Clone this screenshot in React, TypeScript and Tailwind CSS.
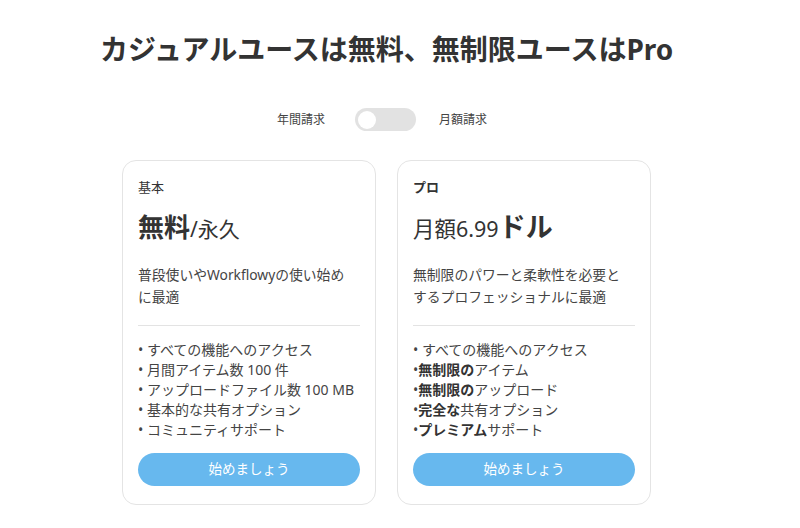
import React from 'react';

const font = { fontFamily: '"Noto Sans", "Noto Sans CJK JP", sans-serif' };

type Feature = { bold?: string; text: string; spaced?: boolean };

const plans = [
  {
    name: '基本',
    nameBold: false,
    price: (
      <>
        <span className="text-[26px] font-bold">無料</span>
        <span className="text-[21px]">/永久</span>
      </>
    ),
    desc: ['普段使いやWorkflowyの使い始め', 'に最適'],
    features: [
      { text: 'すべての機能へのアクセス', spaced: true },
      { text: '月間アイテム数 100 件', spaced: true },
      { text: 'アップロードファイル数 100 MB', spaced: true },
      { text: '基本的な共有オプション', spaced: true },
      { text: 'コミュニティサポート', spaced: true },
    ] as Feature[],
  },
  {
    name: 'プロ',
    nameBold: true,
    price: (
      <>
        <span className="text-[21.5px]">月額6.99</span>
        <span className="text-[27px] font-bold">ドル</span>
      </>
    ),
    desc: ['無制限のパワーと柔軟性を必要と', 'するプロフェッショナルに最適'],
    features: [
      { text: 'すべての機能へのアクセス', spaced: true },
      { bold: '無制限の', text: 'アイテム' },
      { bold: '無制限の', text: 'アップロード' },
      { bold: '完全な', text: '共有オプション' },
      { bold: 'プレミアム', text: 'サポート' },
    ] as Feature[],
  },
];

export default function App() {
  return (
    <div className="w-[800px] h-[528px] bg-white text-[#333] overflow-hidden" style={font}>
      {/* Title */}
      <div className="pt-[27px] pl-[100px]">
        <h1 className="text-[28px] font-bold leading-[44px]">
          カジュアルユースは無料、無制限ユースはPro
        </h1>
      </div>

      {/* Billing toggle */}
      <div className="mt-[37px] flex items-center justify-center pr-[36px] text-[12px] text-[#444]">
        <span className="mr-[30px]">年間請求</span>
        <div className="w-[61px] h-[23px] rounded-full bg-[#e2e2e2] flex items-center px-[3px]">
          <div className="w-[18px] h-[18px] rounded-full bg-white" />
        </div>
        <span className="ml-[23px]">月額請求</span>
      </div>

      {/* Cards */}
      <div className="mt-[29px] pl-[122px] flex gap-[21px]">
        {plans.map((p) => (
          <div
            key={p.name}
            className="w-[254px] h-[345px] rounded-[14px] border border-[#e4e4e4] px-[15px] pt-[16px] flex flex-col"
          >
            <p className={`text-[13px] leading-[20px] ${p.nameBold ? 'font-bold' : ''}`}>{p.name}</p>
            <p className="mt-[15px] leading-[30px]">{p.price}</p>
            <div className="mt-[18px] text-[13.8px] leading-[22px] text-[#444]">
              {p.desc.map((d) => (
                <p key={d}>{d}</p>
              ))}
            </div>
            <div className="mt-[17px] h-px bg-[#e3e3e3]" />
            <ul className="mt-[14px] text-[14px] leading-[20px] text-[#444]">
              {p.features.map((f, i) => (
                <li key={i}>
                  {f.spaced ? '• ' : '•'}
                  {f.bold && <span className="font-bold text-[#333]">{f.bold}</span>}
                  {f.text}
                </li>
              ))}
            </ul>
            <button className="mt-[13px] h-[33px] w-full rounded-full bg-[#67b8ee] text-white text-[13.5px]">
              始めましょう
            </button>
          </div>
        ))}
      </div>
    </div>
  );
}
